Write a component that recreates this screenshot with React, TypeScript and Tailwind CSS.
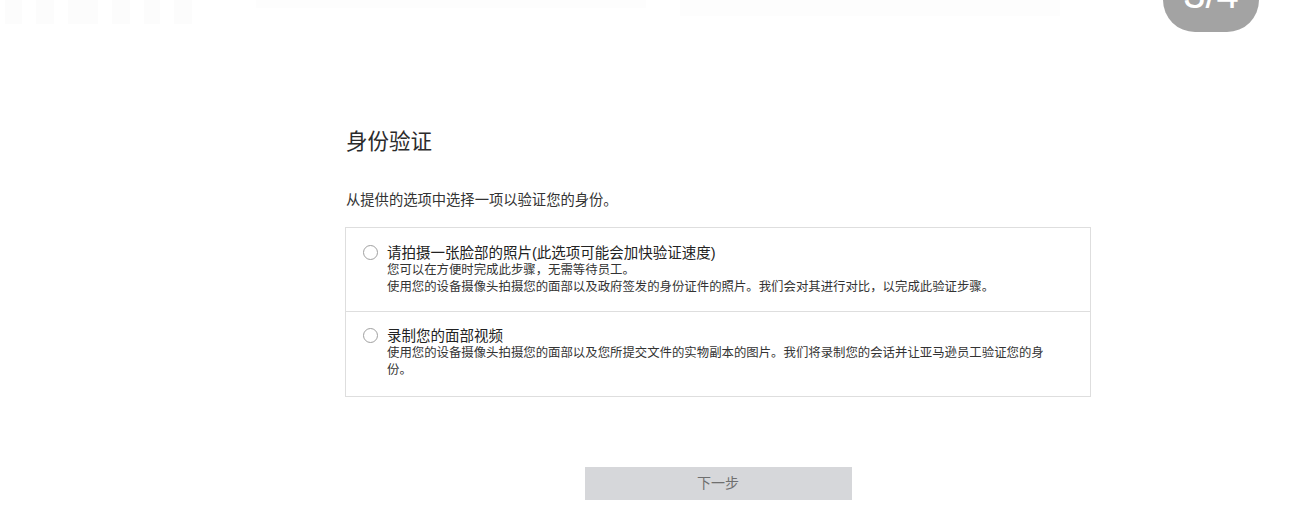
import React from "react";

const font = { fontFamily: '"Liberation Sans", "Noto Sans CJK SC", sans-serif' };

function Radio() {
  return <span className="mt-[1px] h-[15px] w-[15px] shrink-0 rounded-full border border-[#a0a0a0] bg-white" />;
}

export default function App() {
  return (
    <div className="relative h-[506px] w-[1290px] overflow-hidden bg-white text-[#333]" style={font}>
      {/* faint top strip remnants */}
      <div className="absolute left-0 top-0 flex w-full gap-[14px] pl-[5px]">
        <div className="h-[24px] w-[17px] bg-[#fcfcfc]" />
        <div className="h-[24px] w-[18px] bg-[#fcfcfc]" />
        <div className="h-[24px] w-[30px] bg-[#fcfcfc]" />
        <div className="h-[24px] w-[18px] bg-[#fcfcfc]" />
        <div className="h-[24px] w-[16px] bg-[#fcfcfc]" />
        <div className="h-[24px] w-[18px] bg-[#fcfcfc]" />
        <div className="ml-[50px] h-[8px] w-[390px] bg-[#fdfdfd]" />
        <div className="ml-[20px] h-[16px] w-[380px] bg-[#fdfdfd]" />
      </div>

      {/* page badge */}
      <div className="absolute left-[1163px] top-[-32px] flex h-[64px] w-[96px] justify-center rounded-full bg-[#a3a3a3] pt-[6px]">
        <span className="text-[40px] leading-none text-white">3/4</span>
      </div>

      <div className="ml-[345px] w-[746px] pt-[127px]">
        <h1 className="pl-[1px] text-[21.5px] font-normal leading-[30px] text-[#2b2b2b]">身份验证</h1>
        <p className="mt-[33px] pl-[1px] text-[14.3px] leading-[20px] text-[#333]">从提供的选项中选择一项以验证您的身份。</p>

        <div className="mt-[17px] border border-[#dedede]">
          <div className="flex h-[84px] gap-[9px] border-b border-[#dedede] pl-[17px] pr-[30px] pt-[16px]">
            <Radio />
            <div>
              <div className="text-[14.5px] leading-[18px] text-[#222]">请拍摄一张脸部的照片(此选项可能会加快验证速度)</div>
              <div className="text-[12.4px] leading-[16.5px] text-[#333]">您可以在方便时完成此步骤，无需等待员工。</div>
              <div className="text-[12.4px] leading-[16.5px] text-[#333]">
                使用您的设备摄像头拍摄您的面部以及政府签发的身份证件的照片。我们会对其进行对比，以完成此验证步骤。
              </div>
            </div>
          </div>
          <div className="flex h-[84px] gap-[9px] pl-[17px] pr-[30px] pt-[15px]">
            <Radio />
            <div>
              <div className="text-[14.5px] leading-[18px] text-[#222]">录制您的面部视频</div>
              <div className="text-[12.4px] leading-[16.5px] text-[#333]">
                使用您的设备摄像头拍摄您的面部以及您所提交文件的实物副本的图片。我们将录制您的会话并让亚马逊员工验证您的身份。
              </div>
            </div>
          </div>
        </div>

        <div className="mt-[70px] flex justify-center">
          <button className="h-[33px] w-[267px] bg-[#d6d7da] text-[14px] text-[#6f6f6f]">下一步</button>
        </div>
      </div>
    </div>
  );
}
